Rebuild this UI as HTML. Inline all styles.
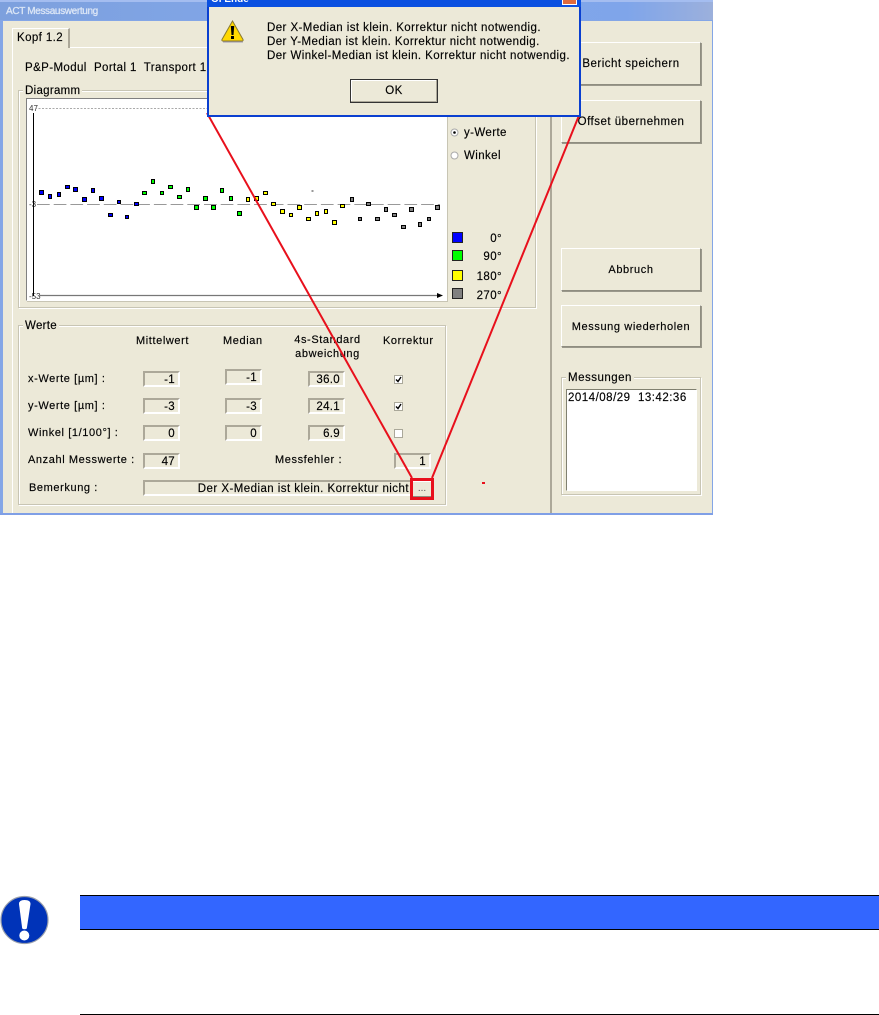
<!DOCTYPE html>
<html><head><meta charset="utf-8"><style>
html,body{margin:0;padding:0;background:#fff}
body{width:879px;height:1015px;position:relative;overflow:hidden;font-family:"Liberation Sans",sans-serif;font-size:11px;color:#000}
div{position:absolute;box-sizing:border-box}
.t{white-space:nowrap;line-height:14px;color:#000;margin-top:1px;letter-spacing:.6px;-webkit-text-stroke:.15px #000}
.n{font-size:11.5px;letter-spacing:.4px}
.f{border:2px solid;border-color:#aca899 #fff #fff #aca899;background:#ece9d8;text-align:right;padding-right:3px;line-height:15px;height:16px;width:37px;font-size:11.5px;letter-spacing:.3px;color:#000;-webkit-text-stroke:.15px #000}
.b{border:1px solid;border-color:#fff #8f8d80 #8f8d80 #fff;box-shadow:1px 1px 0 #9a988b;background:#ece9d8;text-align:center;white-space:nowrap;left:561px;width:140px;color:#000;-webkit-text-stroke:.15px #000}
.g{border:1px solid #c8c5b4;box-shadow:inset 1px 1px 0 #fff,1px 1px 0 #fff}
.l{background:#ece9d8;padding:0 2px;line-height:13px;white-space:nowrap;margin-top:1px;letter-spacing:.3px;color:#000;-webkit-text-stroke:.15px #000}
.c{width:9px;height:9px;background:#fff;border:1px solid #aaa89a;left:394px}
.s{left:452px;width:11px;height:11px;border:1px solid #222}
</style></head><body>
<div style="left:0;top:0;width:713px;height:515px;filter:blur(.3px)">
<div style="left:0;top:0;width:713px;height:515px;background:#84a6e6;border-bottom:2px solid #7f9fe6"></div>
<div style="left:0;top:0;width:713px;height:20px;background:linear-gradient(90deg,#7da0dd,#82a8ec 50%,#7fa5ea 88%,#9cb0dc);border-top:2px solid #a4bdf0"></div>
<div style="left:6px;top:5px;color:#dce6f6;font-size:10px;letter-spacing:-.35px;line-height:14px;white-space:nowrap;-webkit-text-stroke:.3px #dce6f6">ACT Messauswertung</div>
<div style="left:3px;top:21px;width:709px;height:492px;background:#ece9d8"></div>
<div style="left:12px;top:47px;width:537px;height:466px;border-left:1px solid #fff;border-top:1px solid #fff"></div>
<div style="left:550px;top:21px;width:2px;height:492px;background:#aca899"></div>
<div style="left:12px;top:28px;width:58px;height:20px;background:#ece9d8;border:1px solid #fff;border-bottom:0;border-right:2px solid #aca899"></div>
<div class="t n" style="left:17px;top:30px">Kopf 1.2</div>
<div class="t n" style="left:25px;top:60px">P&amp;P-Modul&nbsp; Portal 1&nbsp; Transport 1</div>

<div class="g" style="left:18px;top:90px;width:518px;height:218px"></div>
<div class="l" style="left:23px;top:84px;font-size:11.5px">Diagramm</div>
<div style="left:26px;top:98px;width:421px;height:203px;background:#fff;border:1px solid;border-color:#808080 #fff #fff #808080;box-shadow:1px 1px 0 #c8c5b4"></div>

<svg style="position:absolute;left:0;top:0" width="713" height="515">
<g font-family="Liberation Sans" font-size="8" fill="#333">
<text x="29" y="111">47</text><text x="29" y="207">-3</text><text x="29" y="299">-53</text></g>
<line x1="35" y1="108.5" x2="440" y2="108.5" stroke="#aaa" stroke-dasharray="2 1.5"/>
<line x1="33.5" y1="113" x2="33.5" y2="296" stroke="#000" stroke-width="1"/>
<line x1="37" y1="204.5" x2="440" y2="204.5" stroke="#999" stroke-dasharray="12.7 4"/>
<line x1="40" y1="295.5" x2="438" y2="295.5" stroke="#777" stroke-width="1.2"/>
<path d="M437 293l6 2.5-6 2.5z" fill="#000"/>
<rect x="311.5" y="190.5" width="2" height="1" fill="#333"/>
<g stroke="#000" fill="#0000ff">
<rect x="39.5" y="190.5" width="4" height="4"/><rect x="48.5" y="194.5" width="3" height="4"/><rect x="57.5" y="192.5" width="3" height="4"/><rect x="65.5" y="185.5" width="4" height="3"/><rect x="73.5" y="187.5" width="4" height="4"/><rect x="82.5" y="197.5" width="4" height="4"/><rect x="91.5" y="188.5" width="3" height="4"/><rect x="99.5" y="196.5" width="4" height="4"/><rect x="108.5" y="213.5" width="4" height="3"/><rect x="117.5" y="200.5" width="3" height="3"/><rect x="125.5" y="215.5" width="3" height="3"/><rect x="134.5" y="202.5" width="4" height="3"/>
</g>
<g stroke="#000" fill="#00ff00">
<rect x="142.5" y="191.5" width="4" height="3"/><rect x="151.5" y="179.5" width="3" height="4"/><rect x="160.5" y="191.5" width="3" height="3"/><rect x="168.5" y="185.5" width="4" height="3"/><rect x="177.5" y="195.5" width="4" height="3"/><rect x="186.5" y="187.5" width="3" height="4"/><rect x="194.5" y="205.5" width="4" height="4"/><rect x="203.5" y="196.5" width="4" height="4"/><rect x="211.5" y="205.5" width="4" height="4"/><rect x="220.5" y="188.5" width="3" height="4"/><rect x="229.5" y="196.5" width="3" height="4"/><rect x="237.5" y="211.5" width="4" height="4"/>
</g>
<g stroke="#000" fill="#ffff00">
<rect x="246.5" y="197.5" width="3" height="4"/><rect x="254.5" y="196.5" width="4" height="4"/><rect x="263.5" y="191.5" width="4" height="3"/><rect x="271.5" y="202.5" width="4" height="3"/><rect x="280.5" y="209.5" width="4" height="4"/><rect x="289.5" y="213.5" width="3" height="3"/><rect x="297.5" y="205.5" width="4" height="4"/><rect x="306.5" y="217.5" width="4" height="3"/><rect x="315.5" y="211.5" width="3" height="4"/><rect x="324.5" y="209.5" width="3" height="4"/><rect x="332.5" y="220.5" width="4" height="4"/><rect x="340.5" y="204.5" width="4" height="3"/>
</g>
<g stroke="#000" fill="#808080">
<rect x="350.5" y="197.5" width="3" height="4"/><rect x="358.5" y="217.5" width="3" height="3"/><rect x="366.5" y="202.5" width="4" height="3"/><rect x="375.5" y="217.5" width="4" height="3"/><rect x="384.5" y="207.5" width="3" height="4"/><rect x="392.5" y="213.5" width="4" height="3"/><rect x="401.5" y="225.5" width="4" height="3"/><rect x="409.5" y="207.5" width="4" height="4"/><rect x="418.5" y="222.5" width="3" height="4"/><rect x="427.5" y="217.5" width="3" height="3"/><rect x="435.5" y="205.5" width="4" height="4"/>
</g>
<circle cx="454.5" cy="132.5" r="3.5" fill="#fff" stroke="#aaa"/><circle cx="454.5" cy="132.5" r="1.3" fill="#000"/>
<circle cx="454.5" cy="155.5" r="3.5" fill="#fff" stroke="#aaa"/>
</svg>

<div class="t n" style="left:464px;top:125px">y-Werte</div>
<div class="t n" style="left:464px;top:148px">Winkel</div>
<div class="s" style="top:232px;background:#0000ff"></div><div class="t n" style="left:462px;width:40px;text-align:right;top:231px">0°</div>
<div class="s" style="top:250px;background:#00ff00"></div><div class="t n" style="left:462px;width:40px;text-align:right;top:249px">90°</div>
<div class="s" style="top:270px;background:#ffff00"></div><div class="t n" style="left:462px;width:40px;text-align:right;top:269px">180°</div>
<div class="s" style="top:288px;background:#808080"></div><div class="t n" style="left:462px;width:40px;text-align:right;top:288px">270°</div>

<div class="g" style="left:18px;top:325px;width:428px;height:180px"></div>
<div class="l" style="left:23px;top:319px;font-size:11.5px">Werte</div>
<div class="t" style="left:136px;top:333px">Mittelwert</div>
<div class="t" style="left:223px;top:333px">Median</div>
<div class="t" style="left:291px;top:332px;width:73px;text-align:center;white-space:nowrap">4s-Standard<br>abweichung</div>
<div class="t" style="left:383px;top:333px">Korrektur</div>

<div class="t" style="left:28px;top:371px">x-Werte [µm] :</div>
<div class="t" style="left:28px;top:398px">y-Werte [µm] :</div>
<div class="t" style="left:28px;top:425px">Winkel [1/100°] :</div>
<div class="t" style="left:28px;top:452px">Anzahl Messwerte :</div>
<div class="t" style="left:29px;top:480px">Bemerkung :</div>
<div class="t" style="left:275px;top:452px">Messfehler :</div>

<div class="f" style="left:143px;top:371px">-1</div><div class="f" style="left:225px;top:369px">-1</div><div class="f" style="left:308px;top:371px">36.0</div>
<div class="f" style="left:143px;top:398px">-3</div><div class="f" style="left:225px;top:398px">-3</div><div class="f" style="left:308px;top:398px">24.1</div>
<div class="f" style="left:143px;top:425px">0</div><div class="f" style="left:225px;top:425px">0</div><div class="f" style="left:308px;top:425px">6.9</div>
<div class="f" style="left:143px;top:453px">47</div><div class="f" style="left:394px;top:453px">1</div>
<div class="f" style="left:143px;top:480px;width:269px;padding-right:1px;overflow:hidden;white-space:nowrap;letter-spacing:.45px">Der X-Median ist klein. Korrektur nicht</div>

<div class="c" style="top:375px"><svg width="7" height="7" style="display:block"><path d="M1 3.500L3 5.500L6 1" fill="none" stroke="#000" stroke-width="1.400"/></svg></div>
<div class="c" style="top:402px"><svg width="7" height="7" style="display:block"><path d="M1 3.500L3 5.500L6 1" fill="none" stroke="#000" stroke-width="1.400"/></svg></div>
<div class="c" style="top:429px"></div>

<div class="b" style="left:412px;top:481px;width:20px;height:16px;line-height:13px;font-size:10px;color:#555;-webkit-text-stroke:0">...</div>
<div style="left:410px;top:478px;width:24px;height:22px;border:3px solid #e8101c"></div>
<div style="left:482px;top:482px;width:3px;height:2px;background:#e8101c"></div>

<div class="b" style="top:42px;height:43px;line-height:43px;font-size:11.5px;letter-spacing:.5px">Bericht speichern</div>
<div class="b" style="top:100px;height:43px;line-height:43px;font-size:11.5px;letter-spacing:.5px">Offset übernehmen</div>
<div class="b" style="top:248px;height:43px;line-height:43px;font-size:11px;letter-spacing:.6px">Abbruch</div>
<div class="b" style="top:305px;height:42px;line-height:43px;font-size:11px;letter-spacing:.6px">Messung wiederholen</div>
<div class="g" style="left:561px;top:377px;width:140px;height:118px"></div>
<div class="l" style="left:566px;top:371px;font-size:11.5px;letter-spacing:.5px">Messungen</div>
<div style="left:566px;top:389px;width:131px;height:102px;background:#fff;border:1px solid;border-color:#808070 #fff #fff #808070;box-shadow:0 0 0 1px #ece9d8"></div>
<div class="t n" style="left:568px;top:390px;letter-spacing:.5px">2014/08/29&nbsp; 13:42:36</div>

<svg style="position:absolute;left:0;top:0" width="713" height="515">
<line x1="207" y1="113" x2="412" y2="478" stroke="#e8101c" stroke-width="2"/>
<line x1="580" y1="113" x2="432" y2="478" stroke="#e8101c" stroke-width="2"/>
</svg>

<div style="left:207px;top:0;width:374px;height:117px;background:#ece9d8;border:2px solid #0a3fd0;border-top:0"></div>
<div style="left:207px;top:0;width:374px;height:7px;background:#0a50e0"></div>
<div style="left:211px;top:-7px;color:#fff;font-weight:bold;font-size:10px;line-height:14px;white-space:nowrap">Ol Ende</div>
<div style="left:562px;top:0;width:15px;height:5px;background:#e06a3c;border:1px solid #fff;border-top:0"></div>
<svg style="position:absolute;left:221px;top:20px" width="24" height="23">
<path d="M11.500 1L22 19.500Q22.500 21 21 21H2Q.5 21 1 19.500Z" fill="#ffd800" stroke="#8a7a30"/>
<path d="M2 22H22" stroke="#9a98b0"/>
<path d="M9.800 6h3.400l-.7 9h-2z" fill="#000"/><rect x="10" y="16" width="3" height="3" fill="#000"/>
</svg>
<div class="t" style="left:267px;top:20px;font-size:11.5px;letter-spacing:.43px">Der X-Median ist klein. Korrektur nicht notwendig.</div>
<div class="t" style="left:267px;top:34px;font-size:11.5px;letter-spacing:.43px">Der Y-Median ist klein. Korrektur nicht notwendig.</div>
<div class="t" style="left:267px;top:48px;font-size:11.5px;letter-spacing:.43px">Der Winkel-Median ist klein. Korrektur nicht notwendig.</div>
<div style="left:350px;top:79px;width:88px;height:24px;border:1px solid #333;box-shadow:inset -1px -1px 0 #aca899,inset 1px 1px 0 #fff;text-align:center;line-height:23px;background:#ece9d8;font-size:11.5px;letter-spacing:.4px;color:#000;-webkit-text-stroke:.15px #000">OK</div>
</div>

<svg style="position:absolute;left:0;top:895px" width="50" height="50">
<circle cx="24.500" cy="25" r="23.500" fill="#0033b8" stroke="#9aa0ac" stroke-width="1.200"/>
<path d="M19 9Q19 5 24.500 5Q30.500 5 30.500 9L26.800 33.500Q24.500 35 22.200 33.500Z" fill="#fff"/>
<circle cx="24.300" cy="40.500" r="5" fill="#fff"/>
</svg>
<div style="left:80px;top:895px;width:799px;height:35px;background:#3366ff;border-top:1px solid #000;border-bottom:1px solid #000"></div>
<div style="left:80px;top:1014px;width:799px;height:1px;background:#000"></div>
</body></html>
